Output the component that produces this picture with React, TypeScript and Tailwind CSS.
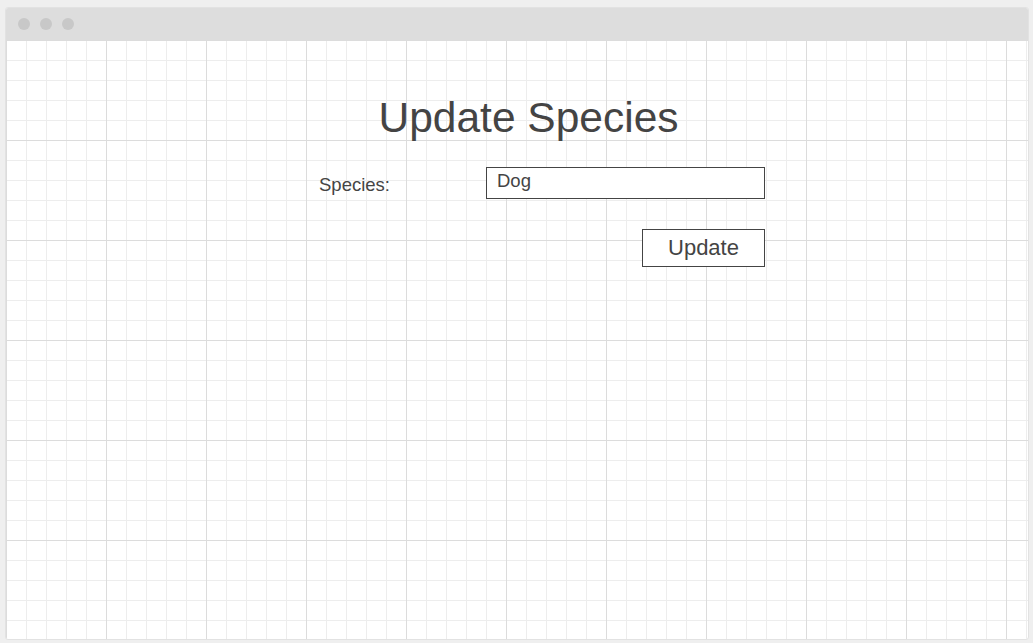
export default function App() {
  return (
    <div className="min-h-screen w-full bg-[#efefef] pt-[7px] pl-[5px] font-['Liberation_Sans',Arial,sans-serif] text-[#444]">
      <div className="flex h-[633px] w-[1024px] flex-col overflow-hidden rounded-[3px] border border-[#e2e2e2] bg-white">
        {/* title bar */}
        <div className="flex h-[32px] shrink-0 items-center gap-[10px] bg-[#dddddd] pl-[12px]">
          <span className="h-[12px] w-[12px] rounded-full bg-[#c8c8c8]" />
          <span className="h-[12px] w-[12px] rounded-full bg-[#c8c8c8]" />
          <span className="h-[12px] w-[12px] rounded-full bg-[#c8c8c8]" />
        </div>

        {/* grid canvas */}
        <div className="flex-1 [background-image:linear-gradient(to_right,#dcdcdc_1px,transparent_1px),linear-gradient(to_bottom,#dcdcdc_1px,transparent_1px),linear-gradient(to_right,#ededed_1px,transparent_1px),linear-gradient(to_bottom,#ededed_1px,transparent_1px)] [background-size:100px_100px,100px_100px,20px_20px,20px_20px]">
          <h1 className="mt-[57px] pl-[23px] text-center text-[42.5px] leading-[42px] font-normal">Update Species</h1>

          <div className="ml-[313px] mt-[28px] flex w-[446px] flex-col">
            <div className="flex items-start">
              <label className="mt-[9px] w-[167px] text-[18.5px] leading-[18px]">Species:</label>
              <input
                readOnly
                value="Dog"
                className="h-[32px] w-[279px] border border-[#444] bg-white px-[10px] pt-[4px] pb-[8px] text-[18.5px] leading-[18px] text-[#444] outline-none"
              />
            </div>
            <div className="mt-[30px] flex justify-end">
              <button className="flex h-[38px] w-[123px] items-center justify-center border border-[#444] bg-white text-[22px] leading-[22px] text-[#444]">
                Update
              </button>
            </div>
          </div>
        </div>
      </div>
    </div>
  );
}
